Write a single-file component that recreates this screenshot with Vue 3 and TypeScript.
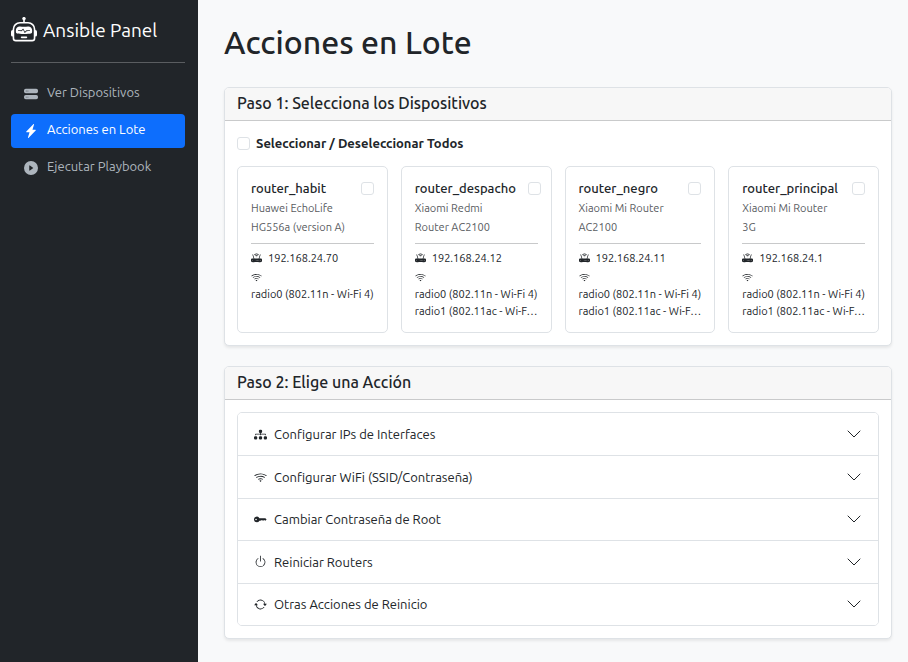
<script setup lang="ts">
import { computed, ref } from 'vue'

interface Device {
  name: string
  model: string[]
  ip: string
  radios: string[]
}

const icons: Record<string, string> = {
  robot:
    'M6 12.5a.5.5 0 0 1 .5-.5h3a.5.5 0 0 1 0 1h-3a.5.5 0 0 1-.5-.5M3 8.062C3 6.76 4.235 5.765 5.53 5.886a26.6 26.6 0 0 0 4.94 0C11.765 5.765 13 6.76 13 8.062v1.157a.93.93 0 0 1-.765.935c-.845.147-2.34.346-4.235.346s-3.39-.2-4.235-.346A.93.93 0 0 1 3 9.219zm4.542-.827a.25.25 0 0 0-.217.068l-.92.9a25 25 0 0 1-1.871-.183.25.25 0 0 0-.068.495c.55.076 1.232.149 2.02.193a.25.25 0 0 0 .189-.071l.754-.736.847 1.71a.25.25 0 0 0 .404.062l.932-.97a25 25 0 0 0 1.922-.188.25.25 0 0 0-.068-.495c-.538.074-1.207.145-1.98.189a.25.25 0 0 0-.166.076l-.754.785-.842-1.7a.25.25 0 0 0-.182-.135M8.5 1.866a1 1 0 1 0-1 0V3h-2A4.5 4.5 0 0 0 1 7.5V8a1 1 0 0 0-1 1v2a1 1 0 0 0 1 1v1a2 2 0 0 0 2 2h10a2 2 0 0 0 2-2v-1a1 1 0 0 0 1-1V9a1 1 0 0 0-1-1v-.5A4.5 4.5 0 0 0 10.5 3h-2zM14 7.5V13a1 1 0 0 1-1 1H3a1 1 0 0 1-1-1V7.5A3.5 3.5 0 0 1 5.5 4h5A3.5 3.5 0 0 1 14 7.5',
  stack:
    'M2 9a2 2 0 0 0-2 2v1a2 2 0 0 0 2 2h12a2 2 0 0 0 2-2v-1a2 2 0 0 0-2-2zm.5 3a.5.5 0 1 1 0-1 .5.5 0 0 1 0 1m2 0a.5.5 0 1 1 0-1 .5.5 0 0 1 0 1M2 2a2 2 0 0 0-2 2v1a2 2 0 0 0 2 2h12a2 2 0 0 0 2-2V4a2 2 0 0 0-2-2zm.5 3a.5.5 0 1 1 0-1 .5.5 0 0 1 0 1m2 0a.5.5 0 1 1 0-1 .5.5 0 0 1 0 1',
  bolt: 'M11.251.068a.5.5 0 0 1 .227.58L9.677 6.5H13a.5.5 0 0 1 .364.843l-8 8.5a.5.5 0 0 1-.842-.49L6.323 9.5H3a.5.5 0 0 1-.364-.843l8-8.5a.5.5 0 0 1 .615-.09z',
  play: 'M16 8A8 8 0 1 1 0 8a8 8 0 0 1 16 0M6.79 5.093A.5.5 0 0 0 6 5.5v5a.5.5 0 0 0 .79.407l3.5-2.5a.5.5 0 0 0 0-.814z',
  router:
    'M5.525 3.025a3.5 3.5 0 0 1 4.95 0 .5.5 0 1 0 .707-.707 4.5 4.5 0 0 0-6.364 0 .5.5 0 0 0 .707.707M6.94 4.44a1.5 1.5 0 0 1 2.12 0 .5.5 0 0 0 .708-.708 2.5 2.5 0 0 0-3.536 0 .5.5 0 0 0 .707.707ZM2.974 2.342a.5.5 0 1 0-.948.316L3.806 8H1.5A1.5 1.5 0 0 0 0 9.5v2A1.5 1.5 0 0 0 1.5 13H2a.5.5 0 0 0 .5.5h2A.5.5 0 0 0 5 13h6a.5.5 0 0 0 .5.5h2a.5.5 0 0 0 .5-.5h.5a1.5 1.5 0 0 0 1.5-1.5v-2A1.5 1.5 0 0 0 14.5 8h-2.306l1.78-5.342a.5.5 0 1 0-.948-.316L11.14 8H4.86zM2.5 11a.5.5 0 1 1 0-1 .5.5 0 0 1 0 1m4.5-.5a.5.5 0 1 1 1 0 .5.5 0 0 1-1 0m2.5.5a.5.5 0 1 1 0-1 .5.5 0 0 1 0 1m1.5-.5a.5.5 0 1 1 1 0 .5.5 0 0 1-1 0m2 0a.5.5 0 1 1 1 0 .5.5 0 0 1-1 0M8.5 5.5a.5.5 0 1 1-1 0 .5.5 0 0 1 1 0',
  wifi: 'M15.384 6.115a.485.485 0 0 0-.047-.736A12.44 12.44 0 0 0 8 3C5.259 3 2.723 3.882.663 5.379a.485.485 0 0 0-.048.736.52.52 0 0 0 .668.05A11.45 11.45 0 0 1 8 4c2.507 0 4.827.802 6.716 2.164.205.148.49.13.668-.049M13.229 8.271a.482.482 0 0 0-.063-.745A9.46 9.46 0 0 0 8 6c-1.905 0-3.68.56-5.166 1.526a.48.48 0 0 0-.063.745.525.525 0 0 0 .652.065A8.46 8.46 0 0 1 8 7a8.46 8.46 0 0 1 4.576 1.336c.206.132.48.108.653-.065m-2.183 2.183c.226-.226.185-.605-.1-.75A6.5 6.5 0 0 0 8 9c-1.06 0-2.062.254-2.946.704-.285.145-.326.524-.1.75l.015.015c.16.16.407.19.611.09A5.5 5.5 0 0 1 8 10c.868 0 1.69.201 2.42.56.203.1.45.07.61-.091zM9.06 12.44c.196-.196.198-.52-.04-.66A2 2 0 0 0 8 11.5a2 2 0 0 0-1.02.28c-.238.14-.236.464-.04.66l.706.706a.5.5 0 0 0 .707 0l.707-.707z',
  diagram:
    'M6 3.5A1.5 1.5 0 0 1 7.5 2h1A1.5 1.5 0 0 1 10 3.5v1A1.5 1.5 0 0 1 8.5 6v1H14a.5.5 0 0 1 .5.5v1a.5.5 0 0 1-1 0V8h-5v.5a.5.5 0 0 1-1 0V8h-5v.5a.5.5 0 0 1-1 0v-1A.5.5 0 0 1 2 7h5.5V6A1.5 1.5 0 0 1 6 4.5zm-6 8A1.5 1.5 0 0 1 1.5 10h1A1.5 1.5 0 0 1 4 11.5v1A1.5 1.5 0 0 1 2.5 14h-1A1.5 1.5 0 0 1 0 12.5zm6 0A1.5 1.5 0 0 1 7.5 10h1a1.5 1.5 0 0 1 1.5 1.5v1A1.5 1.5 0 0 1 8.5 14h-1A1.5 1.5 0 0 1 6 12.5zm6 0a1.5 1.5 0 0 1 1.5-1.5h1a1.5 1.5 0 0 1 1.5 1.5v1a1.5 1.5 0 0 1-1.5 1.5h-1a1.5 1.5 0 0 1-1.5-1.5z',
  key: 'M3.5 11.5a3.5 3.5 0 1 1 3.163-5H14L15.5 8 14 9.5l-1-1-1 1-1-1-1 1-1-1-1 1H6.663a3.5 3.5 0 0 1-3.163 2M2.5 9a1 1 0 1 0 0-2 1 1 0 0 0 0 2',
  power:
    'M7.5 1v7h1V1zM3 8.812a5 5 0 0 1 2.578-4.375l-.485-.874A6 6 0 1 0 11 3.616l-.501.865A5 5 0 1 1 3 8.812',
  repeat:
    'M11.534 7h3.932a.25.25 0 0 1 .192.41l-1.966 2.36a.25.25 0 0 1-.384 0l-1.966-2.36a.25.25 0 0 1 .192-.41m-11 2h3.932a.25.25 0 0 0 .192-.41L2.692 6.23a.25.25 0 0 0-.384 0L.342 8.59A.25.25 0 0 0 .534 9M8 3c-1.552 0-2.94.707-3.857 1.818a.5.5 0 1 1-.771-.636A6.002 6.002 0 0 1 13.917 7H12.9A5 5 0 0 0 8 3M3.1 9a5.002 5.002 0 0 0 8.757 2.182.5.5 0 1 1 .771.636A6.002 6.002 0 0 1 2.083 9z',
}

const navItems = [
  { label: 'Ver Dispositivos', icon: 'stack', active: false },
  { label: 'Acciones en Lote', icon: 'bolt', active: true },
  { label: 'Ejecutar Playbook', icon: 'play', active: false },
]

const devices: Device[] = [
  { name: 'router_habit', model: ['Huawei EchoLife', 'HG556a (version A)'], ip: '192.168.24.70', radios: ['radio0 (802.11n - Wi-Fi 4)'] },
  { name: 'router_despacho', model: ['Xiaomi Redmi', 'Router AC2100'], ip: '192.168.24.12', radios: ['radio0 (802.11n - Wi-Fi 4)', 'radio1 (802.11ac - Wi-F…'] },
  { name: 'router_negro', model: ['Xiaomi Mi Router', 'AC2100'], ip: '192.168.24.11', radios: ['radio0 (802.11n - Wi-Fi 4)', 'radio1 (802.11ac - Wi-F…'] },
  { name: 'router_principal', model: ['Xiaomi Mi Router', '3G'], ip: '192.168.24.1', radios: ['radio0 (802.11n - Wi-Fi 4)', 'radio1 (802.11ac - Wi-F…'] },
]

const actions = [
  { label: 'Configurar IPs de Interfaces', icon: 'diagram' },
  { label: 'Configurar WiFi (SSID/Contraseña)', icon: 'wifi' },
  { label: 'Cambiar Contraseña de Root', icon: 'key' },
  { label: 'Reiniciar Routers', icon: 'power' },
  { label: 'Otras Acciones de Reinicio', icon: 'repeat' },
]

const selected = ref<string[]>([])
const allSelected = computed<boolean>({
  get: () => selected.value.length === devices.length,
  set: (on) => {
    selected.value = on ? devices.map((d) => d.name) : []
  },
})
</script>

<template>
  <div class="layout">
    <aside class="sidebar">
      <a class="brand" href="#">
        <svg class="brand-icon" viewBox="0 0 16 16" aria-hidden="true"><path :d="icons.robot" /></svg>
        <span>Ansible Panel</span>
      </a>
      <hr class="sidebar-rule" />
      <nav class="nav">
        <a v-for="item in navItems" :key="item.label" href="#" class="nav-link" :class="{ active: item.active }">
          <svg class="nav-icon" viewBox="0 0 16 16" aria-hidden="true"><path :d="icons[item.icon]" /></svg>
          <span>{{ item.label }}</span>
        </a>
      </nav>
    </aside>

    <main class="main">
      <h1 class="title">Acciones en Lote</h1>

      <section class="card">
        <h2 class="card-header">Paso 1: Selecciona los Dispositivos</h2>
        <div class="card-body">
          <div class="select-all">
            <input id="all" v-model="allSelected" class="check" type="checkbox" />
            <label for="all">Seleccionar / Deseleccionar Todos</label>
          </div>
          <div class="devices">
            <article v-for="d in devices" :key="d.name" class="device">
              <div class="device-head">
                <label class="device-name" :for="d.name">{{ d.name }}</label>
                <input :id="d.name" v-model="selected" class="check" type="checkbox" :value="d.name" />
              </div>
              <div class="device-model">
                <div v-for="line in d.model" :key="line">{{ line }}</div>
              </div>
              <hr class="device-rule" />
              <div class="device-ip">
                <svg class="small-icon" viewBox="0 0 16 16" aria-hidden="true"><path :d="icons.router" /></svg>
                <span>{{ d.ip }}</span>
              </div>
              <div class="device-wifi">
                <svg class="small-icon" viewBox="0 0 16 16" aria-hidden="true"><path :d="icons.wifi" /></svg>
              </div>
              <div v-for="r in d.radios" :key="r" class="radio">{{ r }}</div>
            </article>
          </div>
        </div>
      </section>

      <section class="card">
        <h2 class="card-header">Paso 2: Elige una Acción</h2>
        <div class="card-body">
          <div class="accordion">
            <button v-for="a in actions" :key="a.label" type="button" class="accordion-button" aria-expanded="false">
              <svg class="action-icon" viewBox="0 0 16 16" aria-hidden="true"><path :d="icons[a.icon]" /></svg>
              <span class="action-label">{{ a.label }}</span>
              <svg class="chevron" viewBox="0 0 16 16" aria-hidden="true"><path d="m2 5 6 6 6-6" /></svg>
            </button>
          </div>
        </div>
      </section>
    </main>
  </div>
</template>

<style>
body {
  background: #f8f9fa;
}
</style>

<style scoped>
.layout,
.layout * {
  box-sizing: border-box;
}

.layout {
  display: flex;
  min-height: 100vh;
  font-family: Ubuntu, 'Noto Sans', sans-serif;
  font-size: 13px;
  line-height: 20px;
  color: #212529;
}

svg {
  flex: none;
  fill: currentColor;
}

.sidebar {
  flex: none;
  width: 198px;
  padding: 11px 13px 11px 11px;
  background: #212529;
}

.brand {
  display: flex;
  align-items: center;
  gap: 6px;
  height: 38px;
  color: #fff;
  font-size: 19px;
  line-height: 30px;
  white-space: nowrap;
  text-decoration: none;
}

.brand-icon {
  width: 26px;
  height: 26px;
}

.sidebar-rule {
  margin: 13px 0 14px;
  border: 0;
  border-top: 1px solid #5a5d60;
}

.nav {
  display: flex;
  flex-direction: column;
  gap: 3px;
}

.nav-link {
  display: flex;
  align-items: center;
  gap: 9px;
  padding: 5px 13px 9px;
  border-radius: 4px;
  color: #adb5bd;
  text-decoration: none;
}

.nav-link.active {
  background: #0d6efd;
  color: #fff;
}

.nav-icon {
  width: 14px;
  height: 14px;
  margin-top: 4px;
}

.main {
  flex: 1;
  min-width: 0;
  padding: 22px 16px 22px 26px;
}

.title {
  margin: 0 0 25px;
  font-size: 32px;
  font-weight: 500;
  line-height: 40px;
}

.card {
  border: 1px solid #dee2e6;
  border-radius: 5px;
  background: #fff;
  box-shadow: 0 2px 3px rgba(0, 0, 0, 0.075);
}

.card + .card {
  margin-top: 20px;
}

.card-header {
  margin: 0;
  padding: 5px 12px 7px;
  border-bottom: 1px solid #c9cacb;
  border-radius: 4px 4px 0 0;
  background: #f7f7f7;
  font-size: 16px;
  font-weight: 500;
  line-height: 20px;
}

.card-body {
  padding: 12px;
}

.check {
  flex: none;
  appearance: none;
  width: 13px;
  height: 13px;
  margin: 0;
  border: 1px solid #dee2e6;
  border-radius: 3px;
  background: #fff;
}

.check:checked {
  border-color: #0d6efd;
  background: #0d6efd;
}

.select-all {
  display: flex;
  align-items: center;
  gap: 6px;
  margin-bottom: 13px;
  font-weight: 700;
}

.devices {
  display: grid;
  grid-template-columns: repeat(4, minmax(0, 1fr));
  gap: 13px;
}

.device {
  padding: 12px 13px;
  border: 1px solid #dee2e6;
  border-radius: 5px;
  font-size: 11px;
  line-height: 19px;
  white-space: nowrap;
}

.device-head {
  display: flex;
  align-items: center;
  justify-content: space-between;
  gap: 12px;
}

.device-name {
  font-size: 13px;
  font-weight: 500;
}

.device-model {
  padding-top: 1px;
  color: #595c5f;
}

.device-rule {
  margin: 6px 0 5px;
  border: 0;
  border-top: 1px solid #c8c9ca;
}

.device-ip {
  display: flex;
  align-items: center;
  gap: 6px;
}

.device-wifi {
  display: flex;
  align-items: center;
  height: 18px;
}

.small-icon {
  width: 11px;
  height: 11px;
}

.radio {
  line-height: 17px;
}

.accordion {
  display: grid;
  grid-auto-rows: 1fr;
  min-height: 214px;
  border: 1px solid #dee2e6;
  border-radius: 5px;
  overflow: hidden;
}

.accordion-button {
  display: flex;
  align-items: center;
  gap: 7px;
  padding: 10px 16px;
  border: 0;
  background: #fff;
  color: inherit;
  font: inherit;
  text-align: left;
}

.accordion-button + .accordion-button {
  border-top: 1px solid #dee2e6;
}

.action-icon {
  width: 13px;
  height: 13px;
}

.action-label {
  flex: 1;
}

.chevron {
  width: 16px;
  height: 16px;
  fill: none;
  stroke: currentColor;
  stroke-linecap: round;
  stroke-linejoin: round;
}
</style>
